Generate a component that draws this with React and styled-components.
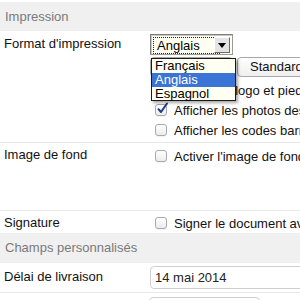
import React from "react";
import styled, { createGlobalStyle } from "styled-components";

const Global = createGlobalStyle`
  html, body { margin: 0; padding: 0; background: #fff; overflow: hidden; }
  body {
    font-family: "Liberation Sans", Arial, Helvetica, sans-serif;
    font-size: 13px;
    color: #1a1a1a;
  }
`;

const Page = styled.div`
  width: 460px;
  padding-top: ${(p) => p.$top}px;
`;

const SectionHeader = styled.div`
  height: ${(p) => p.$h}px;
  line-height: ${(p) => p.$h}px;
  background: #f0f0f0;
  color: #7a7a7a;
  padding-left: 5px;
  white-space: nowrap;
`;

const Row = styled.div`
  display: grid;
  grid-template-columns: 150px 1fr;
  min-height: ${(p) => p.$h}px;
  border-bottom: ${(p) => (p.$noBorder ? "none" : "1px solid #e8e8e8")};
  box-sizing: border-box;
`;

const Label = styled.div`
  padding: ${(p) => p.$pt}px 0 0 4px;
  line-height: 15px;
  white-space: nowrap;
  color: #111;
`;

const Controls = styled.div`
  display: flex;
  flex-direction: column;
  align-items: flex-start;
  padding-top: ${(p) => p.$pt}px;
`;

const SelectWrap = styled.div`
  position: relative;
  margin-left: ${(p) => p.$ml || 0}px;
`;

const SelectBox = styled.div`
  position: relative;
  box-sizing: border-box;
  width: 83px;
  height: ${(p) => p.$h}px;
  background: #fffff2;
  border: 1px solid #9a9a9a;
  border-top-color: #7d7d7d;
  border-left-color: #7d7d7d;
  box-shadow: inset 1px 1px 0 #c8c8c8;
`;

const FocusRect = styled.div`
  position: absolute;
  left: 2px;
  top: 2px;
  width: 62px;
  height: 15px;
  border: 1px dotted #222;
  line-height: 15px;
  padding-left: 3px;
  box-sizing: content-box;
  color: #000;
`;

const ArrowButton = styled.div`
  position: absolute;
  right: 2px;
  top: 2px;
  width: 14px;
  height: 14px;
  background: #e4e4e4;
  border: 1px solid;
  border-color: #fff #6e6e6e #6e6e6e #fff;
  display: flex;
  align-items: center;
  justify-content: center;
`;

const Dropdown = styled.div`
  position: absolute;
  left: 1px;
  top: 24px;
  width: 83px;
  background: #fffff2;
  border: 1px solid #1a1a1a;
  box-shadow: 2px 2px 3px rgba(0, 0, 0, 0.35);
  z-index: 5;
`;

const Option = styled.div`
  height: ${(p) => p.$h}px;
  line-height: ${(p) => p.$h}px;
  padding-left: 3px;
  background: ${(p) => (p.$active ? "#3a74d6" : "transparent")};
  color: ${(p) => (p.$active ? "#fff" : "#000")};
  white-space: nowrap;
`;

const ButtonRow = styled.div`
  display: flex;
  align-items: center;
  gap: 4px;
  margin-top: 2px;
`;

const PlainSelect = styled.div`
  box-sizing: border-box;
  width: 83px;
  height: 20px;
  border: 1px solid #aaa;
  border-radius: 4px;
  background: #fff;
`;

const Button = styled.div`
  box-sizing: border-box;
  height: 20px;
  line-height: 18px;
  padding: 0 12px;
  border: 1px solid #a8a8a8;
  border-radius: 4px;
  background: linear-gradient(#ffffff, #efefef);
  color: #111;
  white-space: nowrap;
`;

const CheckList = styled.div`
  display: flex;
  flex-direction: column;
  margin-top: ${(p) => p.$mt || 0}px;
`;

const CheckRow = styled.div`
  display: flex;
  align-items: center;
  gap: 7px;
  height: 20px;
  padding-left: 5px;
  white-space: nowrap;
  color: #111;
`;

const Box = styled.span`
  position: relative;
  box-sizing: border-box;
  width: 12px;
  height: 12px;
  flex: none;
  border: 1px solid #a9a9a9;
  border-radius: 3px;
  background: linear-gradient(#ffffff, #ececec);
  box-shadow: 0 1px 0 rgba(0, 0, 0, 0.05);
`;

const Tick = styled.svg`
  position: absolute;
  left: 0px;
  top: -3px;
`;

const TextInput = styled.div`
  box-sizing: border-box;
  width: ${(p) => p.$w}px;
  height: 23px;
  margin-left: ${(p) => p.$ml || 0}px;
  line-height: 21px;
  padding-left: 4px;
  border: 1px solid #cfcfcf;
  border-radius: 4px;
  background: #fff;
  color: #222;
  white-space: nowrap;
`;

function Checkbox({ checked, children }) {
  return (
    <CheckRow>
      <Box>
        {checked && (
          <Tick width="13" height="13" viewBox="0 0 13 13">
            <path d="M2.5 7.2 L5 10 L11 1.5" fill="none" stroke="#1e3c8c" strokeWidth="2" strokeLinecap="round" strokeLinejoin="round" />
          </Tick>
        )}
      </Box>
      <span>{children}</span>
    </CheckRow>
  );
}

export default function App() {
  return (
    <>
      <Global />
      <Page $top={2}>
        <SectionHeader $h={29}>Impression</SectionHeader>

        <Row $h={112}>
          <Label $pt={5}>Format d'impression</Label>
          <Controls $pt={3}>
            <SelectWrap>
              <SelectBox $h={21}>
                <FocusRect>Anglais</FocusRect>
                <ArrowButton>
                  <svg width="8" height="5" viewBox="0 0 8 5">
                    <path d="M0 0 H8 L4 5 Z" fill="#000" />
                  </svg>
                </ArrowButton>
              </SelectBox>
              <Dropdown>
                <Option $h={14}>Français</Option>
                <Option $h={14} $active>Anglais</Option>
                <Option $h={13}>Espagnol</Option>
              </Dropdown>
            </SelectWrap>
            <ButtonRow>
              <PlainSelect />
              <Button>Standard</Button>
            </ButtonRow>
            <CheckList $mt={3}>
              <Checkbox>Afficher le logo et pied de page</Checkbox>
              <Checkbox checked>Afficher les photos des articles</Checkbox>
              <Checkbox>Afficher les codes barres</Checkbox>
            </CheckList>
          </Controls>
        </Row>

        <Row $h={68}>
          <Label $pt={4}>Image de fond</Label>
          <Controls $pt={3}>
            <Checkbox>Activer l'image de fond</Checkbox>
          </Controls>
        </Row>

        <Row $h={22} $noBorder>
          <Label $pt={4}>Signature</Label>
          <Controls $pt={2}>
            <Checkbox>Signer le document avec</Checkbox>
          </Controls>
        </Row>

        <SectionHeader $h={30}>Champs personnalisés</SectionHeader>

        <Row $h={30}>
          <Label $pt={6}>Délai de livraison</Label>
          <Controls $pt={3}>
            <TextInput $w={220}>14 mai 2014</TextInput>
          </Controls>
        </Row>

        <Row $h={30}>
          <Label $pt={6}></Label>
          <Controls $pt={4}>
            <TextInput $w={111} $ml={-1}></TextInput>
          </Controls>
        </Row>
      </Page>
    </>
  );
}
